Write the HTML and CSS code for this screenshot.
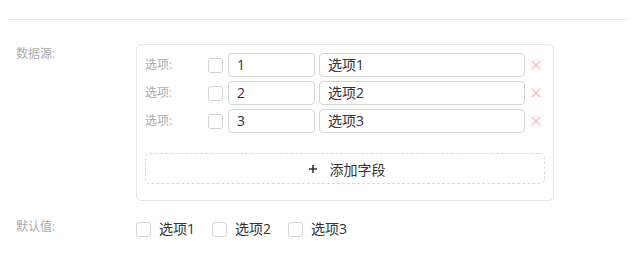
FILE: index.html
```html
<!DOCTYPE html>
<html lang="zh">
<head>
<meta charset="utf-8">
<link rel="stylesheet" href="styles.css">
</head>
<body>
<div class="page">
  <div class="divider"></div>
  <div class="form-item">
    <div class="form-label">数据源:</div>
    <div class="form-content">
      <div class="card">
        <div class="opt-row">
          <span class="opt-label">选项:</span>
          <span class="checkbox"></span>
          <div class="input input-key">1</div>
          <div class="input input-val">选项1</div>
          <span class="remove"><svg width="10" height="10" viewBox="0 0 10 10"><path d="M0.8 0.8L9.2 9.2M9.2 0.8L0.8 9.2" stroke="#f9bcbc" stroke-width="1.3" fill="none"/></svg></span>
        </div>
        <div class="opt-row">
          <span class="opt-label">选项:</span>
          <span class="checkbox"></span>
          <div class="input input-key">2</div>
          <div class="input input-val">选项2</div>
          <span class="remove"><svg width="10" height="10" viewBox="0 0 10 10"><path d="M0.8 0.8L9.2 9.2M9.2 0.8L0.8 9.2" stroke="#f9bcbc" stroke-width="1.3" fill="none"/></svg></span>
        </div>
        <div class="opt-row">
          <span class="opt-label">选项:</span>
          <span class="checkbox"></span>
          <div class="input input-key">3</div>
          <div class="input input-val">选项3</div>
          <span class="remove"><svg width="10" height="10" viewBox="0 0 10 10"><path d="M0.8 0.8L9.2 9.2M9.2 0.8L0.8 9.2" stroke="#f9bcbc" stroke-width="1.3" fill="none"/></svg></span>
        </div>
        <div class="add-btn">
          <svg class="plus" width="8" height="8" viewBox="0 0 8 8"><path d="M4 0V8M0 4H8" stroke="#333" stroke-width="1.6" fill="none"/></svg>
          <span>添加字段</span>
        </div>
      </div>
    </div>
  </div>
  <div class="form-item form-item-default">
    <div class="form-label">默认值:</div>
    <div class="form-content check-group">
      <label class="check-item"><span class="checkbox"></span><span class="check-text">选项1</span></label>
      <label class="check-item"><span class="checkbox"></span><span class="check-text">选项2</span></label>
      <label class="check-item"><span class="checkbox"></span><span class="check-text">选项3</span></label>
    </div>
  </div>
</div>
</body>
</html>
```

FILE: styles.css
```css
html, body {
  margin: 0;
  padding: 0;
  background: #ffffff;
}
body {
  font-family: "Open Sans", "Noto Sans CJK SC", sans-serif;
  color: #333;
}
.page {
  padding: 19px 10px 0 8px;
}
.divider {
  height: 1px;
  background: #e8e8e8;
  margin-bottom: 24px;
}
.form-item {
  display: flex;
  align-items: flex-start;
}
.form-label {
  width: 128px;
  padding-left: 8px;
  box-sizing: border-box;
  font-size: 12px;
  line-height: 19px;
  color: #ababab;
  flex: none;
}
.form-content {
  flex: none;
}
.card {
  width: 418px;
  box-sizing: border-box;
  border: 1px solid #e6e6e6;
  border-radius: 5px;
  padding: 8px 8px 16px 8px;
}
.opt-row {
  display: flex;
  align-items: center;
  height: 24px;
  margin-bottom: 4px;
}
.opt-row:last-of-type {
  margin-bottom: 0;
}
.opt-label {
  width: 63px;
  font-size: 12px;
  color: #ababab;
  line-height: 24px;
}
.checkbox {
  display: inline-block;
  width: 15px;
  height: 15px;
  box-sizing: border-box;
  border: 1px solid #d4d4d4;
  border-radius: 3px;
  background: #fff;
  flex: none;
}
.opt-row .checkbox {
  margin-right: 5px;
}
.input {
  height: 24px;
  box-sizing: border-box;
  border: 1px solid #d6d6d6;
  border-radius: 4px;
  padding-left: 8px;
  font-size: 14px;
  line-height: 22px;
  color: #333;
}
.input-key {
  width: 87px;
  margin-right: 4px;
}
.input-val {
  width: 206px;
}
.remove {
  width: 19px;
  padding-left: 6px;
  box-sizing: border-box;
  display: flex;
  align-items: center;
  height: 24px;
}
.add-btn {
  margin-top: 20px;
  height: 31px;
  box-sizing: border-box;
  border: 1px dashed #d9d9d9;
  border-radius: 5px;
  display: flex;
  align-items: center;
  justify-content: center;
  font-size: 14px;
  color: #333;
  padding-left: 4px;
}
.plus {
  margin-right: 13px;
}
.form-item-default {
  margin-top: 16px;
}
.check-group {
  display: flex;
  align-items: center;
  height: 24px;
}
.check-item {
  display: flex;
  align-items: center;
  margin-right: 17px;
}
.check-text {
  margin-left: 8px;
  font-size: 14px;
  line-height: 24px;
  color: #333;
}
```
